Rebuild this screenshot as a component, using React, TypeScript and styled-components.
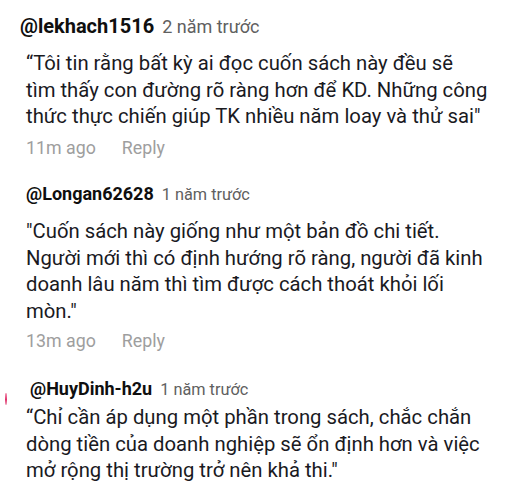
import styled, { createGlobalStyle } from 'styled-components';

const GlobalStyle = createGlobalStyle`
  html, body {
    margin: 0;
    padding: 0;
    background: #ffffff;
  }
  body {
    font-family: Roboto, "Noto Sans", "Liberation Sans", sans-serif;
    -webkit-font-smoothing: antialiased;
  }
`;

const Page = styled.div`
  width: 530px;
  height: 501px;
  overflow: hidden;
  background: #ffffff;
  display: flex;
  flex-direction: column;
`;

const Comment = styled.div<{ $top: number }>`
  position: relative;
  display: flex;
  flex-direction: column;
  margin-top: ${({ $top }) => $top}px;
  padding-left: 26px;
`;

const Header = styled.div<{ $indent: number }>`
  display: flex;
  align-items: baseline;
  gap: 8px;
  line-height: 1.2;
  margin-left: ${({ $indent }) => $indent}px;
`;

const Author = styled.span<{ $size: number }>`
  font-size: ${({ $size }) => $size}px;
  font-weight: 700;
  color: #0f0f0f;
`;

const When = styled.span<{ $size: number }>`
  font-size: ${({ $size }) => $size}px;
  color: #606060;
`;

const Body = styled.p<{ $gap: number }>`
  margin: ${({ $gap }) => $gap}px 0 0;
  font-size: 20.3px;
  line-height: 26.5px;
  color: #1a1a1f;
`;

const Meta = styled.div<{ $gap: number }>`
  display: flex;
  gap: 26px;
  margin-top: ${({ $gap }) => $gap}px;
  font-size: 17.8px;
  line-height: 1.2;
  color: #9e9e9e;
`;

const Mark = styled.span`
  position: absolute;
  left: 5px;
  top: 15px;
  width: 2px;
  height: 12px;
  border-radius: 1px;
  background: linear-gradient(#f4a3bd, #e0306a 55%, #f0b0c4);
`;

type Item = {
  author: string;
  when: string;
  lines: string[];
  ago?: string;
  top: number;
  nameSize: number;
  whenSize: number;
  indent: number;
  gap: number;
  metaGap?: number;
  mark?: boolean;
};

const comments: Item[] = [
  {
    author: '@lekhach1516',
    when: '2 năm trước',
    lines: [
      '“Tôi tin rằng bất kỳ ai đọc cuốn sách này đều sẽ',
      'tìm thấy con đường rõ ràng hơn để KD. Những công',
      'thức thực chiến giúp TK nhiều năm loay và thử sai"',
    ],
    ago: '11m ago',
    top: 14,
    nameSize: 20,
    whenSize: 18,
    indent: -6,
    gap: 12,
    metaGap: 7,
  },
  {
    author: '@Longan62628',
    when: '1 năm trước',
    lines: [
      '"Cuốn sách này giống như một bản đồ chi tiết.',
      'Người mới thì có định hướng rõ ràng, người đã kinh',
      'doanh lâu năm thì tìm được cách thoát khỏi lối',
      'mòn.″',
    ],
    ago: '13m ago',
    top: 25,
    nameSize: 18,
    whenSize: 16.3,
    indent: 0,
    gap: 14,
    metaGap: 6,
  },
  {
    author: '@HuyDinh-h2u',
    when: '1 năm trước',
    lines: [
      '“Chỉ cần áp dụng một phần trong sách, chắc chắn',
      'dòng tiền của doanh nghiệp sẽ ổn định hơn và việc',
      'mở rộng thị trường trở nên khả thi.″',
    ],
    top: 26,
    nameSize: 18,
    whenSize: 16.3,
    indent: 4,
    gap: 5,
    mark: true,
  },
];

const App = () => (
  <Page>
    <GlobalStyle />
    {comments.map((c) => (
      <Comment key={c.author} $top={c.top}>
        {c.mark && <Mark />}
        <Header $indent={c.indent}>
          <Author $size={c.nameSize}>{c.author}</Author>
          <When $size={c.whenSize}>{c.when}</When>
        </Header>
        <Body $gap={c.gap}>
          {c.lines.map((l) => (
            <span key={l}>
              {l}
              <br />
            </span>
          ))}
        </Body>
        {c.ago && (
          <Meta $gap={c.metaGap ?? 8}>
            <span>{c.ago}</span>
            <span>Reply</span>
          </Meta>
        )}
      </Comment>
    ))}
  </Page>
);

export default App;
